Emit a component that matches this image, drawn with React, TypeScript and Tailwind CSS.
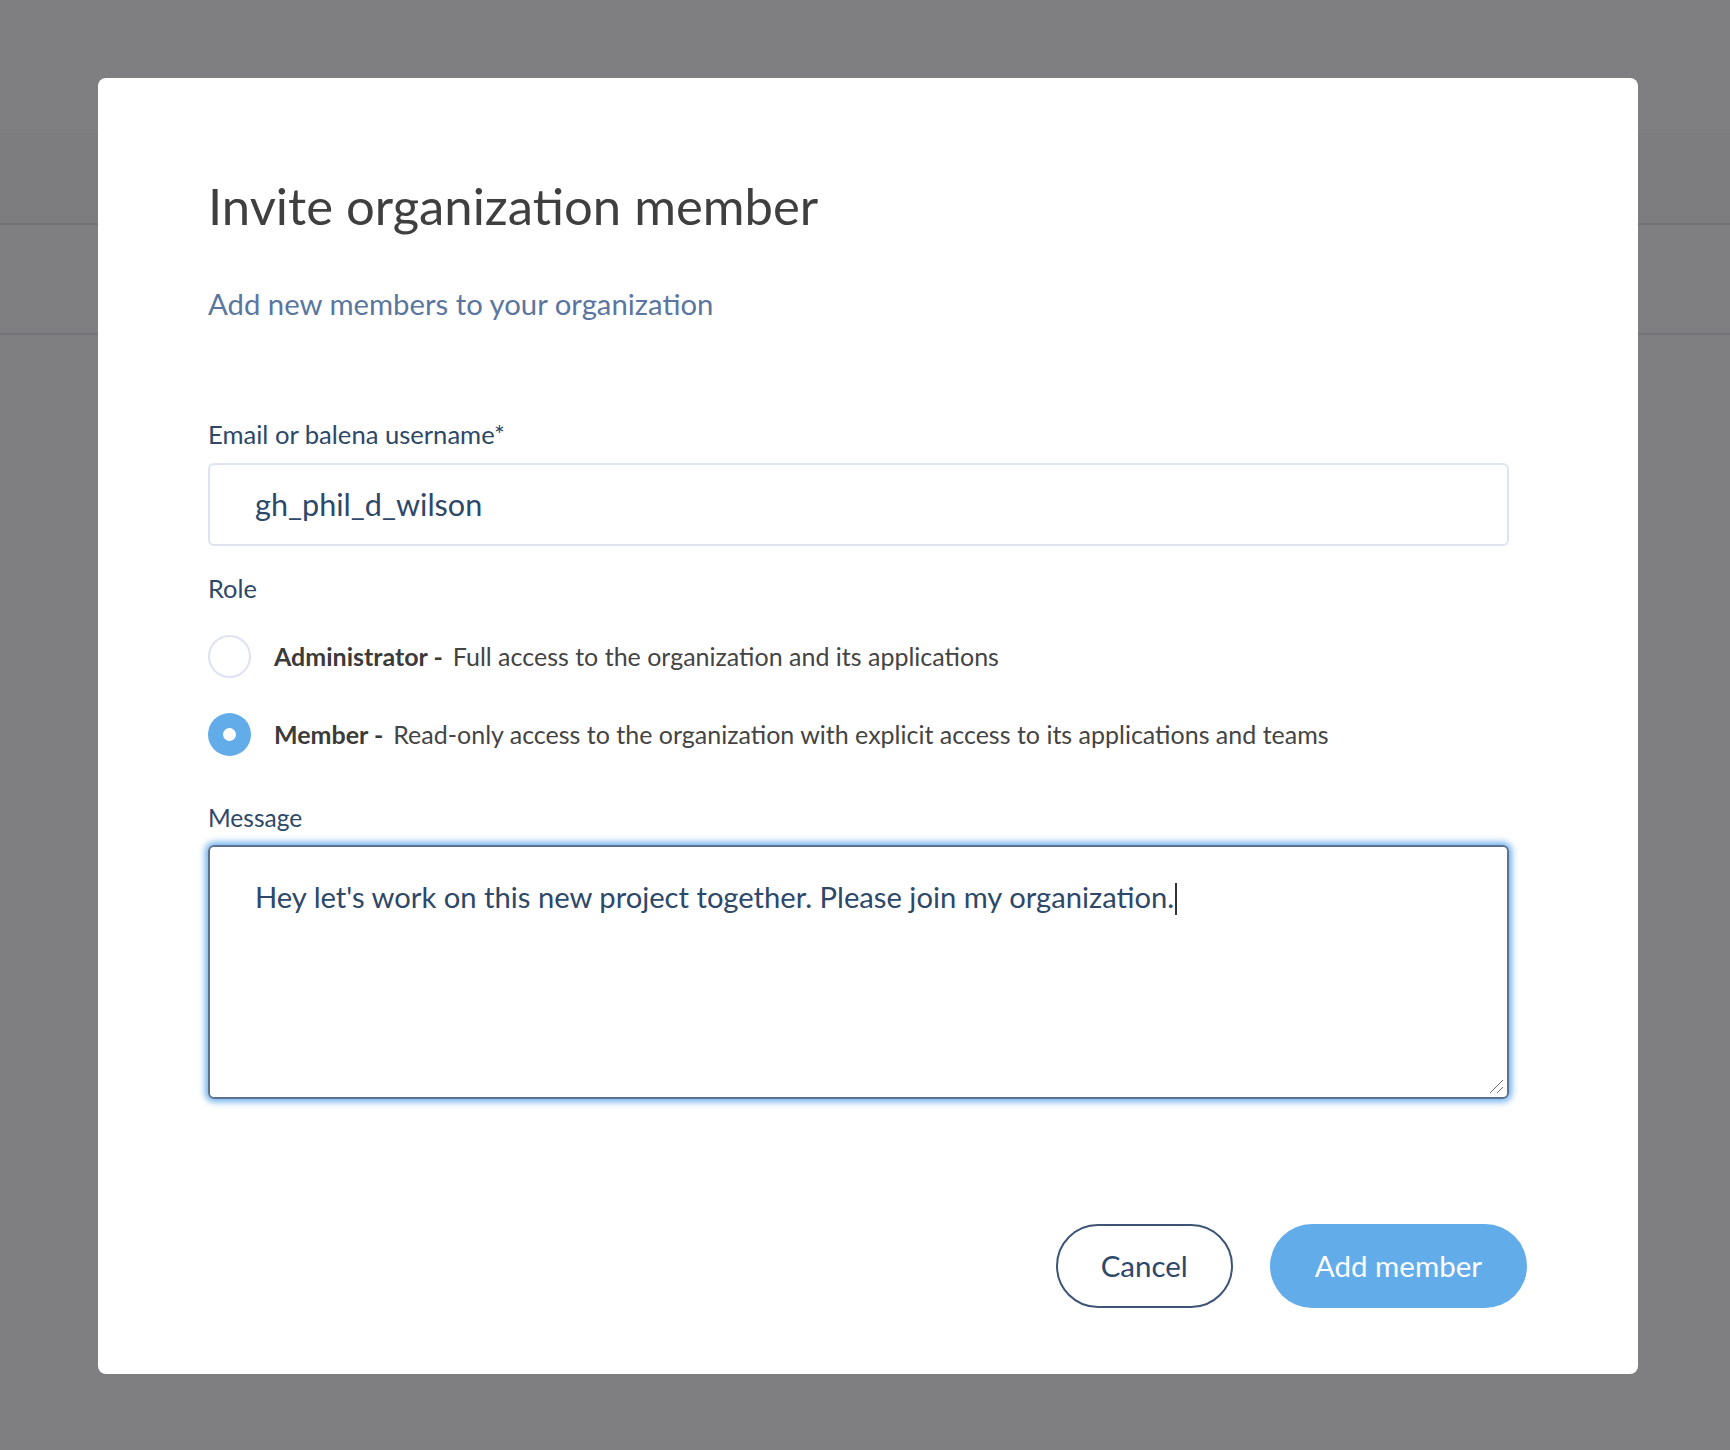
import React from "react";

export default function App() {
  return (
    <div
      className="relative w-[1730px] h-[1450px] overflow-hidden bg-[#7f7f81]"
      style={{ fontFamily: "Lato, 'Noto Sans', sans-serif" }}
    >
      {/* dimmed underlying page */}
      <div className="h-[133px] bg-[#7f7f81]" />
      <div className="h-[92px] bg-[#7d7d80] border-b-2 border-[#737377]" />
      <div className="h-[110px] bg-[#7f7f81] border-b-2 border-[#757579]" />

      {/* modal */}
      <div className="absolute left-[98px] top-[78px] w-[1540px] h-[1296px] bg-white rounded-[8px] pl-[110px] pr-[111px] pt-[98px]">
        <div className="flex flex-col">
          <h1 className="text-[50.8px] leading-[60px] text-[#3f3f3f] font-normal">
            Invite organization member
          </h1>
          <p className="mt-[50px] text-[29.3px] leading-[36px] text-[#5a76a0]">
            Add new members to your organization
          </p>

          <div className="mt-[98px] text-[25.6px] leading-[28px] text-[#2d4869]">
            Email or balena username*
          </div>
          <div className="mt-[15px] w-[1301px] h-[83px] border-2 border-[#dfe2f1] rounded-[6px] pl-[45px] flex items-center text-[30.6px] text-[#2d4869]">
            gh_phil_d_wilson
          </div>

          <div className="mt-[28px] text-[25.4px] leading-[28px] text-[#2d4869]">
            Role
          </div>

          <div className="mt-[33px] h-[43px] flex items-center text-[25px] text-[#444444]">
            <div className="w-[43px] h-[43px] rounded-full border-2 border-[#dfe2f1] shrink-0" />
            <span className="ml-[23px] font-bold text-[#3b3b3b]">Administrator -</span>
            <span className="ml-[10px]">Full access to the organization and its applications</span>
          </div>

          <div className="mt-[35px] h-[43px] flex items-center text-[25px] text-[#444444]">
            <div className="w-[43px] h-[43px] rounded-full bg-[#63acea] shrink-0 flex items-center justify-center">
              <div className="w-[13px] h-[13px] rounded-full bg-white" />
            </div>
            <span className="ml-[23px] font-bold text-[#3b3b3b]">Member -</span>
            <span className="ml-[10px]">
              Read-only access to the organization with explicit access to its applications and teams
            </span>
          </div>

          <div className="mt-[48px] text-[24.5px] leading-[28px] text-[#2d4869]">
            Message
          </div>
          <div className="relative mt-[13px] w-[1301px] h-[254px] border-2 border-[#5b7192] rounded-[6px] shadow-[0_0_6px_3px_rgba(99,172,234,0.9)] pl-[45px] pt-[33px] text-[29.2px] leading-[34px] text-[#2d4869]">
            <span>
              Hey let's work on this new project together. Please join my organization.
            </span>
            <span className="inline-block w-[1.5px] h-[32px] bg-[#333] align-middle ml-[1px] -mt-[4px]" />
            <svg
              className="absolute right-[3px] bottom-[3px]"
              width="16"
              height="16"
              viewBox="0 0 16 16"
            >
              <line x1="2" y1="15" x2="15" y2="2" stroke="#6b6b6b" strokeWidth="1" />
              <line x1="9" y1="15" x2="15" y2="9" stroke="#6b6b6b" strokeWidth="1" />
            </svg>
          </div>

          <div className="mt-[125px] flex justify-end gap-[37px]">
            <button className="h-[84px] px-[43px] rounded-full border-2 border-[#3e5474] text-[29.5px] text-[#2d4869] bg-white">
              Cancel
            </button>
            <button className="h-[84px] px-[45px] rounded-full bg-[#63acea] text-[29.5px] text-white">
              Add member
            </button>
          </div>
        </div>
      </div>
    </div>
  );
}
